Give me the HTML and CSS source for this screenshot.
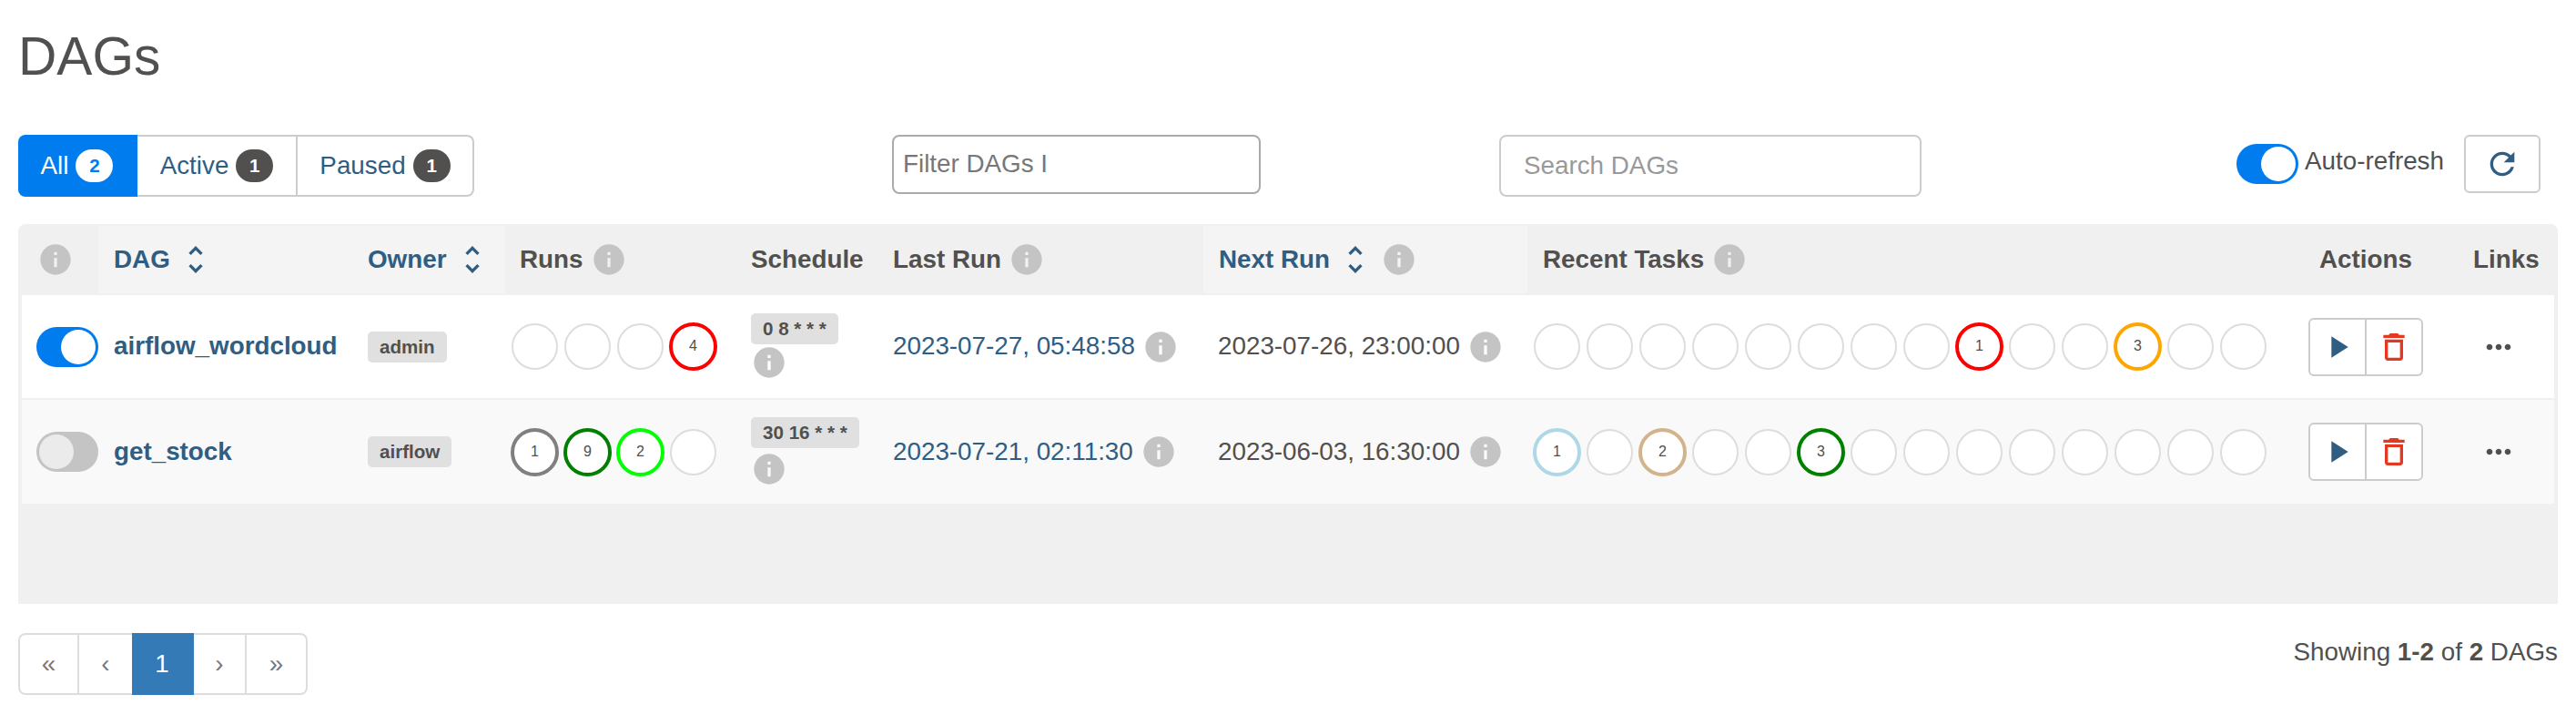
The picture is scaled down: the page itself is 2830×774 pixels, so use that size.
FILE: index.html
```html
<!DOCTYPE html>
<html lang="en">
<head>
<meta charset="utf-8">
<title>DAGs</title>
<link rel="stylesheet" href="styles.css">
</head>
<body>
<svg class="defs" aria-hidden="true">
  <symbol id="i-info" viewBox="0 0 24 24"><path fill-rule="evenodd" d="M12 2C6.48 2 2 6.48 2 12s4.48 10 10 10 10-4.48 10-10S17.52 2 12 2zm1 15h-2v-6h2v6zm0-8h-2V7h2v2z"/></symbol>
  <symbol id="i-sort" viewBox="0 0 24 24"><path d="M12 5.83L15.17 9l1.41-1.41L12 3 7.41 7.59 8.83 9 12 5.83zm0 12.34L8.83 15l-1.41 1.41L12 21l4.59-4.59L15.17 15 12 18.17z"/></symbol>
  <symbol id="i-play" viewBox="0 0 24 24"><path d="M8 5v14l11-7z"/></symbol>
  <symbol id="i-del" viewBox="0 0 24 24"><path d="M6 19c0 1.1.9 2 2 2h8c1.1 0 2-.9 2-2V7H6v12zM8 9h8v10H8V9zm7.5-5l-1-1h-5l-1 1H5v2h14V4z"/></symbol>
  <symbol id="i-more" viewBox="0 0 24 24"><path d="M6 10c-1.1 0-2 .9-2 2s.9 2 2 2 2-.9 2-2-.9-2-2-2zm12 0c-1.1 0-2 .9-2 2s.9 2 2 2 2-.9 2-2-.9-2-2-2zm-6 0c-1.1 0-2 .9-2 2s.9 2 2 2 2-.9 2-2-.9-2-2-2z"/></symbol>
  <symbol id="i-refresh" viewBox="0 0 24 24"><path d="M17.65 6.35C16.2 4.9 14.21 4 12 4c-4.42 0-7.99 3.58-7.99 8s3.57 8 7.99 8c3.73 0 6.84-2.55 7.73-6h-2.08c-.82 2.33-3.04 4-5.65 4-3.31 0-6-2.69-6-6s2.69-6 6-6c1.66 0 3.14.69 4.22 1.78L13 11h7V4l-2.35 2.35z"/></symbol>
</svg>

<h1 class="title">DAGs</h1>

<div class="toolbar">
  <div class="segments">
    <a class="seg seg-on">All <span class="count count-on">2</span></a>
    <a class="seg">Active <span class="count">1</span></a>
    <a class="seg">Paused <span class="count">1</span></a>
  </div>
  <div class="field field-filter">Filter DAGs I</div>
  <div class="field field-search">Search DAGs</div>
  <div class="refresh-group">
    <span class="switch switch-on"></span>
    <span class="refresh-label">Auto-refresh</span>
    <button class="refresh-btn"><svg class="icon"><use href="#i-refresh"/></svg></button>
  </div>
</div>

<div class="table-wrap">
  <table class="dags">
    <colgroup>
      <col class="c-toggle"><col class="c-dag"><col class="c-owner"><col class="c-runs"><col class="c-sched"><col class="c-last"><col class="c-next"><col class="c-tasks"><col class="c-actions"><col class="c-links">
    </colgroup>
    <thead>
      <tr>
        <th class="th-first"><svg class="icon info"><use href="#i-info"/></svg></th>
        <th class="sortable"><span class="th-in">DAG <svg class="icon sort"><use href="#i-sort"/></svg></span></th>
        <th class="sortable"><span class="th-in">Owner <svg class="icon sort"><use href="#i-sort"/></svg></span></th>
        <th class="th-runs"><span class="th-in">Runs <svg class="icon info"><use href="#i-info"/></svg></span></th>
        <th><span class="th-in">Schedule</span></th>
        <th><span class="th-in">Last Run <svg class="icon info"><use href="#i-info"/></svg></span></th>
        <th class="sortable"><span class="th-in">Next Run <svg class="icon sort"><use href="#i-sort"/></svg> <svg class="icon info"><use href="#i-info"/></svg></span></th>
        <th><span class="th-in">Recent Tasks <svg class="icon info"><use href="#i-info"/></svg></span></th>
        <th class="center">Actions</th>
        <th class="center">Links</th>
      </tr>
    </thead>
    <tbody>
      <tr>
        <td class="td-toggle"><span class="switch switch-on"></span></td>
        <td><a class="dag-name">airflow_wordcloud</a></td>
        <td><span class="pill">admin</span></td>
        <td class="td-dots"><div class="dots"><span class="dot"></span><span class="dot"></span><span class="dot"></span><span class="dot hi red">4</span></div></td>
        <td><span class="pill">0 8 * * *</span><svg class="icon info block"><use href="#i-info"/></svg></td>
        <td><span class="dt"><a class="link">2023-07-27, 05:48:58</a><svg class="icon info"><use href="#i-info"/></svg></span></td>
        <td class="td-next"><span class="dt">2023-07-26, 23:00:00<svg class="icon info"><use href="#i-info"/></svg></span></td>
        <td class="td-dots"><div class="dots"><span class="dot"></span><span class="dot"></span><span class="dot"></span><span class="dot"></span><span class="dot"></span><span class="dot"></span><span class="dot"></span><span class="dot"></span><span class="dot hi red">1</span><span class="dot"></span><span class="dot"></span><span class="dot hi orange">3</span><span class="dot"></span><span class="dot"></span></div></td>
        <td class="center"><div class="actions"><button class="act act-play"><svg class="icon"><use href="#i-play"/></svg></button><button class="act act-del"><svg class="icon"><use href="#i-del"/></svg></button></div></td>
        <td class="td-links"><svg class="icon more"><use href="#i-more"/></svg></td>
      </tr>
      <tr class="odd">
        <td class="td-toggle"><span class="switch"></span></td>
        <td><a class="dag-name">get_stock</a></td>
        <td><span class="pill">airflow</span></td>
        <td class="td-dots"><div class="dots"><span class="dot hi gray">1</span><span class="dot hi green">9</span><span class="dot hi lime">2</span><span class="dot"></span></div></td>
        <td><span class="pill">30 16 * * *</span><svg class="icon info block"><use href="#i-info"/></svg></td>
        <td><span class="dt"><a class="link">2023-07-21, 02:11:30</a><svg class="icon info"><use href="#i-info"/></svg></span></td>
        <td class="td-next"><span class="dt">2023-06-03, 16:30:00<svg class="icon info"><use href="#i-info"/></svg></span></td>
        <td class="td-dots"><div class="dots"><span class="dot hi lightblue">1</span><span class="dot"></span><span class="dot hi tan">2</span><span class="dot"></span><span class="dot"></span><span class="dot hi green">3</span><span class="dot"></span><span class="dot"></span><span class="dot"></span><span class="dot"></span><span class="dot"></span><span class="dot"></span><span class="dot"></span><span class="dot"></span></div></td>
        <td class="center"><div class="actions"><button class="act act-play"><svg class="icon"><use href="#i-play"/></svg></button><button class="act act-del"><svg class="icon"><use href="#i-del"/></svg></button></div></td>
        <td class="td-links"><svg class="icon more"><use href="#i-more"/></svg></td>
      </tr>
    </tbody>
  </table>
</div>

<div class="footer">
  <div class="pager">
    <a class="page p1">«</a>
    <a class="page p2">‹</a>
    <a class="page p3 page-on">1</a>
    <a class="page p4">›</a>
    <a class="page p5">»</a>
  </div>
  <div class="showing">Showing <b>1-2</b> of <b>2</b> DAGs</div>
</div>
</body>
</html>
```
FILE: styles.css
```css
* { box-sizing: border-box; }
html, body { margin: 0; height: 774px; overflow: hidden; }
body {
  padding: 30px 20px 0;
  background: #fff;
  color: #51504f;
  font-family: "Liberation Sans", Arial, sans-serif;
  font-size: 27.8px;
  line-height: 1.4;
}
.defs { position: absolute; width: 0; height: 0; }
.icon { width: 40px; height: 40px; flex: none; fill: currentColor; display: block; }

.title {
  margin: 0 0 54px;
  font-size: 58.6px;
  font-weight: 400;
  line-height: 64px;
  color: #51504f;
}

.toolbar {
  display: grid;
  grid-template-columns: 960px 667px 810px 1fr;
  align-items: start;
  height: 68px;
  margin-bottom: 30px;
}
.segments { display: flex; width: 501px; height: 68px; }
.seg {
  display: flex;
  align-items: center;
  justify-content: center;
  gap: 8px;
  border: 2.5px solid #ccc;
  border-left-width: 0;
  color: #305d82;
  background: #fff;
  flex: 176px 0 0;
}
.seg:last-child { flex-basis: 194px; border-radius: 0 8px 8px 0; border-left: 0; }
.seg:nth-child(2) { border-right-width: 2px; }
.seg-on {
  flex-basis: 131px;
  background: #017cee;
  border-color: #017cee;
  border-radius: 8px 0 0 8px;
  color: #fff;
}
.count {
  display: block;
  min-width: 41px;
  height: 36px;
  line-height: 36px;
  border-radius: 18px;
  background: #51504f;
  color: #fff;
  font-size: 20.6px;
  font-weight: 700;
  text-align: center;
}
.count-on { background: #fff; color: #017cee; }

.field {
  display: flex;
  align-items: center;
  background: #fff;
  border-radius: 8px;
}
.field-filter {
  width: 405px;
  height: 65px;
  padding: 0 10px;
  border: 2px solid #aaa;
  color: #777;
}
.field-search {
  width: 464px;
  height: 68px;
  padding: 0 25px;
  border: 2.5px solid #ccc;
  color: #999;
}
.refresh-group { display: flex; align-items: flex-start; }
.refresh-group .switch { margin-top: 10px; }
.refresh-label { margin: 9px 0 0 7px; line-height: 40px; width: 175px; white-space: nowrap; }
.refresh-btn {
  width: 84px;
  height: 64px;
  padding: 0;
  display: flex;
  align-items: center;
  justify-content: center;
  background: #fff;
  border: 2.5px solid #ccc;
  border-radius: 6px;
  color: #305d82;
}

.switch {
  display: block;
  position: relative;
  width: 68px;
  height: 44px;
  border-radius: 22px;
  background: #c4c4c4;
  flex: none;
}
.switch::after {
  content: "";
  position: absolute;
  top: 3px;
  left: 3px;
  width: 38px;
  height: 38px;
  border-radius: 50%;
  background: #ebebeb;
}
.switch-on { background: #017cee; }
.switch-on::after { left: 27px; background: #fff; }

.table-wrap {
  height: 417px;
  padding: 0 4px;
  background: #f0f0f0;
  border-radius: 8px 8px 0 0;
}
.dags {
  width: 2782px;
  table-layout: fixed;
  border-collapse: separate;
  border-spacing: 0;
}
.c-toggle { width: 84px; }
.c-dag { width: 279px; }
.c-owner { width: 168px; }
.c-runs { width: 253px; }
.c-sched { width: 156px; }
.c-last { width: 358px; }
.c-next { width: 356px; }
.c-tasks { width: 820px; }
.c-actions { width: 202px; }
.c-links { width: 106px; }

.dags th {
  height: 78px;
  padding: 0 17px;
  text-align: left;
  font-weight: 700;
  white-space: nowrap;
  color: #51504f;
}
.dags th.center, .dags td.center { text-align: center; }
.dags .th-first { padding: 0 0 0 17px; color: #c4c4c4; }
.dags th.sortable {
  background: #f4f4f4;
  background-clip: padding-box;
  border-top: 2px solid transparent;
  border-bottom: 2px solid transparent;
  color: #305d82;
}
.dags th.th-runs { padding-left: 16px; }
.th-in { display: flex; align-items: center; gap: 8px; }
.info { color: #c4c4c4; }
.sort { color: #305d82; }

.dags td {
  height: 115px;
  padding: 0 17px;
  background: #fff;
  border-bottom: 2px solid #f0f0f0;
  vertical-align: middle;
  white-space: nowrap;
}
.dags tr.odd td { height: 114px; background: #f9f9f9; border-bottom: 0; }
.dags .td-toggle { padding: 0 0 0 16px; }
.dags .td-dots { padding: 0 0 0 7px; }
.dags .td-next { padding-left: 16px; }

.dag-name { font-weight: 700; color: #305d82; }
.link { color: #305d82; }
.pill {
  display: table;
  height: 34px;
  line-height: 34px;
  padding: 0 13px;
  background: #e0e0e0;
  border-radius: 5px;
  font-size: 20.6px;
  font-weight: 700;
  color: #51504f;
}
.odd .info.block { margin-top: 3px; }
.dt { display: flex; align-items: center; gap: 8px; }

.dots { display: flex; align-items: center; gap: 7px; }
.dot {
  display: flex;
  align-items: center;
  justify-content: center;
  width: 51px;
  height: 51px;
  flex: none;
  border: 2.5px solid #ddd;
  border-radius: 50%;
  background: #fff;
  font-size: 16px;
  color: #51504f;
}
.hi { width: 53px; height: 53px; margin: 0 -1px; border-width: 4px; }
.red { border-color: #f00; }
.orange { border-color: #ffa500; }
.gray { border-color: #808080; }
.green { border-color: #008000; }
.lime { border-color: #0f0; }
.lightblue { border-color: #add8e6; }
.tan { border-color: #d2b48c; }

.actions {
  display: inline-flex;
  width: 126px;
  height: 64px;
  background: #fff;
  border: 2px solid #ccc;
  border-radius: 6px;
  vertical-align: middle;
}
.act {
  flex: 1;
  padding: 0;
  display: flex;
  align-items: center;
  justify-content: center;
  background: none;
  border: 0;
}
.act-play { color: #305d82; border-right: 2px solid #ccc; flex: 0 0 62px; }
.act-del { color: #e43921; }
.dags .td-links { padding: 0 0 0 25px; color: #51504f; }

.footer {
  display: flex;
  justify-content: space-between;
  align-items: flex-start;
  margin-top: 32px;
}
.pager { display: flex; height: 68px; width: 318px; }
.page {
  display: flex;
  align-items: center;
  justify-content: center;
  background: #fff;
  border: 2px solid #ddd;
  border-left: 0;
  color: #777;
}
.p1 { width: 67px; border-left: 2px solid #ddd; border-radius: 8px 0 0 8px; }
.p2 { width: 58px; border-right: 0; }
.p3 { width: 68px; }
.p4 { width: 58px; }
.p5 { width: 67px; border-radius: 0 8px 8px 0; }
.page-on { background: #337ab7; border-color: #337ab7; color: #fff; }
.showing { padding-top: 2px; }
.showing b { font-weight: 700; }
```
